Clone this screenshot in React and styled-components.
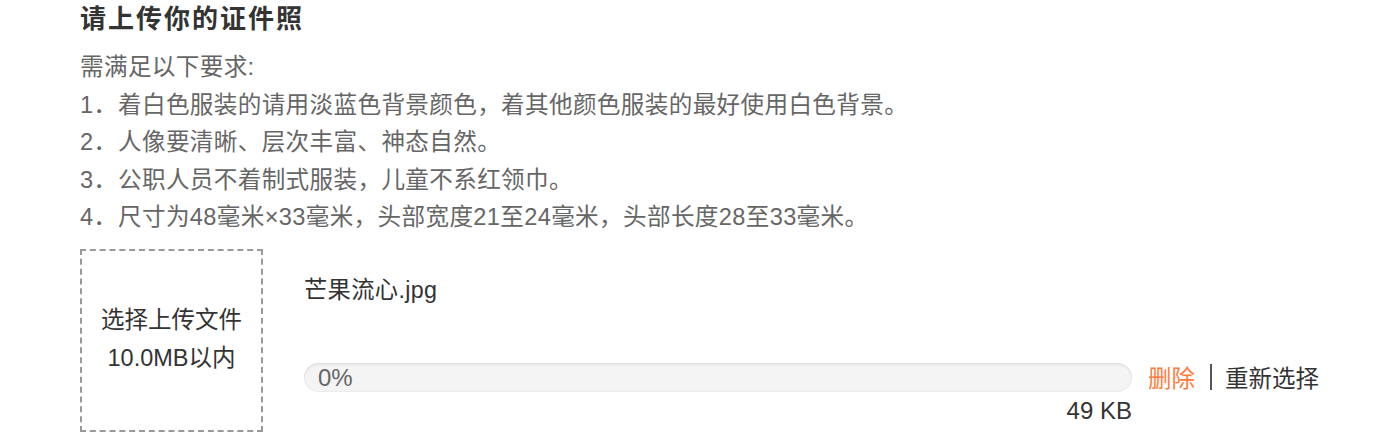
import React from "react";
import styled, { createGlobalStyle } from "styled-components";

const GlobalStyle = createGlobalStyle`
  body {
    margin: 0;
    background: #fff;
    font-family: "Liberation Sans", "Noto Sans CJK SC", sans-serif;
  }
`;

const PageStyled = styled.div`
  padding: 0 0 0 80px;
  width: 1400px;
  height: 436px;
  box-sizing: border-box;
  overflow: hidden;
`;

const TitleStyled = styled.h2`
  margin: 0;
  font-size: 26px;
  line-height: 38px;
  letter-spacing: 2px;
  font-weight: bold;
  color: #333;
`;

const RulesStyled = styled.div`
  margin-top: 11px;
  font-size: 23.6px;
  line-height: 37.6px;
  letter-spacing: 0.35px;
  color: #666;
`;

const RuleStyled = styled.div`
  display: flex;
  white-space: nowrap;
`;

const RuleNumStyled = styled.span`
  display: inline-block;
  width: 38px;
`;

const UploadRowStyled = styled.div`
  display: flex;
  align-items: flex-start;
  gap: 41px;
  margin-top: 12px;
`;

const PickBoxStyled = styled.div`
  width: 183px;
  height: 183px;
  box-sizing: border-box;
  border: 2px dashed #999;
  display: flex;
  flex-direction: column;
  justify-content: center;
  align-items: center;
  font-size: 23.5px;
  line-height: 38px;
  color: #333;
  padding-bottom: 2px;
`;

const FileColumnStyled = styled.div`
  display: flex;
  flex-direction: column;
`;

const FileNameStyled = styled.div`
  margin-top: 26px;
  font-size: 23.3px;
  line-height: 30px;
  letter-spacing: 0.3px;
  color: #333;
`;

const ProgressRowStyled = styled.div`
  display: flex;
  align-items: flex-start;
  margin-top: 58px;
`;

const BarColumnStyled = styled.div`
  width: 828px;
  display: flex;
  flex-direction: column;
`;

const BarStyled = styled.div`
  height: 29px;
  border-radius: 15px;
  background: #f4f4f4;
  box-shadow: inset 0 2px 3px rgba(0, 0, 0, 0.06), inset 0 0 0 1px #ececec;
  padding-left: 14px;
  font-size: 24px;
  line-height: 29px;
  color: #666;
`;

const SizeStyled = styled.div`
  text-align: right;
  margin-top: 6px;
  font-size: 24px;
  line-height: 26px;
  color: #333;
`;

const ActionsStyled = styled.div`
  display: flex;
  align-items: center;
  height: 29px;
  margin-left: 16px;
  font-size: 23.5px;
  white-space: nowrap;
`;

const ActionStyled = styled.span`
  color: ${(p) => (p.danger ? "#fd7b3a" : "#333")};
  cursor: pointer;
`;

const DividerStyled = styled.span`
  width: 2px;
  height: 26px;
  background: #555;
  margin: 0 13px 0 15px;
`;

const rules = [
  "着白色服装的请用淡蓝色背景颜色，着其他颜色服装的最好使用白色背景。",
  "人像要清晰、层次丰富、神态自然。",
  "公职人员不着制式服装，儿童不系红领巾。",
  "尺寸为48毫米×33毫米，头部宽度21至24毫米，头部长度28至33毫米。",
];

const App = () => {
  return (
    <>
      <GlobalStyle />
      <PageStyled>
        <TitleStyled>请上传你的证件照</TitleStyled>
        <RulesStyled>
          <div>需满足以下要求:</div>
          {rules.map((rule, i) => (
            <RuleStyled key={i}>
              <RuleNumStyled>{i + 1}．</RuleNumStyled>
              <span>{rule}</span>
            </RuleStyled>
          ))}
        </RulesStyled>

        <UploadRowStyled>
          <PickBoxStyled>
            <div>选择上传文件</div>
            <div>10.0MB以内</div>
          </PickBoxStyled>
          <FileColumnStyled>
            <FileNameStyled>芒果流心.jpg</FileNameStyled>
            <ProgressRowStyled>
              <BarColumnStyled>
                <BarStyled>0%</BarStyled>
                <SizeStyled>49 KB</SizeStyled>
              </BarColumnStyled>
              <ActionsStyled>
                <ActionStyled danger>删除</ActionStyled>
                <DividerStyled />
                <ActionStyled>重新选择</ActionStyled>
              </ActionsStyled>
            </ProgressRowStyled>
          </FileColumnStyled>
        </UploadRowStyled>
      </PageStyled>
    </>
  );
};

export default App;
